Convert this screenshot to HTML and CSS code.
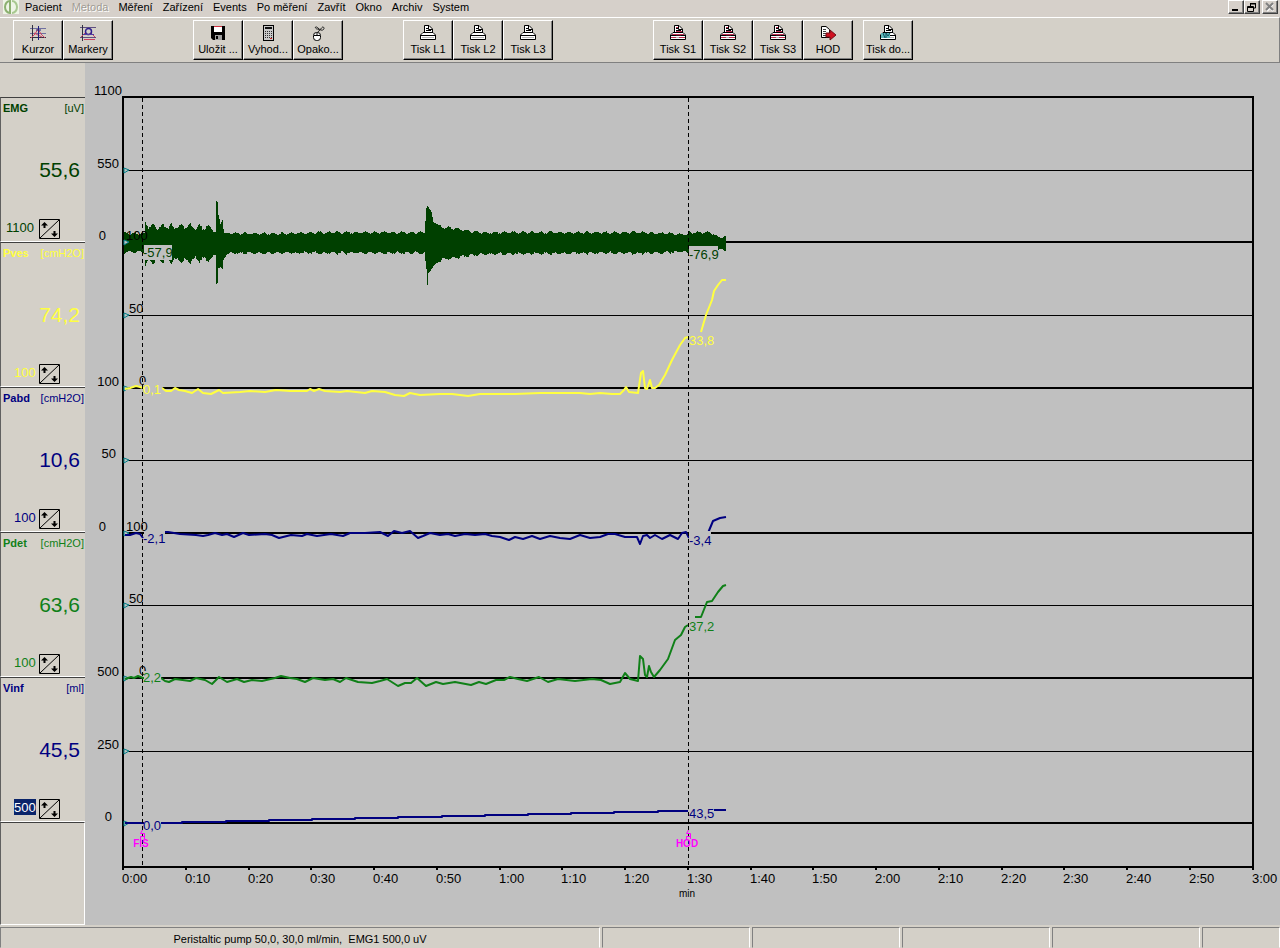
FILE: index.html
```html
<!DOCTYPE html>
<html lang="cs">
<head>
<meta charset="utf-8">
<title>Urodynamika</title>
<link rel="stylesheet" href="styles.css">
</head>
<body>
<svg class="defs" aria-hidden="true">
  <defs>
    <symbol id="printer" viewBox="0 0 16 16">
      <path d="M4.500 8V0.500H9L12.500 4V8" fill="#fff" stroke="#000"/>
      <path d="M8.500 1V4.500H12M6 3.500H8M6 5.500H11" fill="none" stroke="#000"/>
      <path d="M3 7.500H13L15.500 10V14.500H0.500V10Z" fill="#fff" stroke="#000"/>
      <path d="M1 10.500H15M3 7.500H13" stroke="#000"/>
      <path d="M2 12.500H14" stroke="#b8b8b8"/>
    </symbol>
    <symbol id="printer-red" viewBox="0 0 16 16">
      <use href="#printer"/>
      <path d="M6 2.500H8M6 6.500H12M2 9.500H14M1 12.500H6M9 12.500H15" stroke="#c03050"/>
      <path d="M6 10.500H11" stroke="#301018"/>
    </symbol>
    <symbol id="spin" viewBox="0 0 21 20">
      <path d="M0.500 19.500V0.500H20.500V19.500ZM1 19L20 1" fill="none" stroke="#000"/>
      <path d="M5.500 3L9 6.500H6.500V9H4.500V6.500H2ZM15.500 18L19 14.500H16.500V12H14.500V14.500H12Z" fill="#000"/>
    </symbol>
  </defs>
</svg>

<header class="menubar">
  <svg class="logo" viewBox="0 0 16 14" aria-hidden="true">
    <rect width="16" height="14" fill="#eef4e6"/>
    <path d="M7 1A5 6 0 0 0 7 13Z" fill="none" stroke="#8cb070" stroke-width="2"/>
    <path d="M9 1A5 6 0 0 1 9 13" fill="none" stroke="#a8c890" stroke-width="2"/>
  </svg>
  <nav class="menu">
    <button>Pacient</button><button disabled>Metoda</button><button>Měření</button><button>Zařízení</button><button>Events</button><button>Po měření</button><button>Zavřít</button><button>Okno</button><button>Archiv</button><button>System</button>
  </nav>
  <div class="winbtns">
    <button aria-label="Minimalizovat"><svg viewBox="0 0 12 10"><path d="M2 8H8" stroke="#000" stroke-width="2"/></svg></button>
    <button aria-label="Obnovit"><svg viewBox="0 0 12 10"><path d="M4.500 4V1.500H9.500V6H8M4 1.500H10M1.500 4.500H7.500V9.500H1.500ZM1 5.500H8M4 2H10" fill="none" stroke="#000"/></svg></button>
    <button class="close" aria-label="Zavřít okno" disabled><svg viewBox="0 0 12 10"><path d="M3 2L9 9M9 2L3 9" stroke="#fff" stroke-width="2"/><path d="M2 1L9 8M9 1L2 8" stroke="#808080" stroke-width="2"/></svg></button>
  </div>
</header>

<div class="toolbar">
  <div class="group">
    <button><svg viewBox="0 0 16 16"><path d="M0 3.500H16M0 8.500H16" stroke="#7070a0"/><path d="M2.500 0V16M0 12.500H16" stroke="#303040"/><path d="M1 13L5 9L8 4L11 9L15 13M4 8L12 12" fill="none" stroke="#d04060"/><path d="M8.500 1V15M6 5H11" stroke="#202080"/></svg>Kurzor</button>
    <button><svg viewBox="0 0 16 16"><path d="M0 2.500H16M0 12.500H16" stroke="#605080"/><path d="M2.500 0V16" stroke="#303040"/><path d="M1 12L5 8L8 10L11 8L15 12M4 14.500H15" fill="none" stroke="#d04060"/><circle cx="8.500" cy="6.500" r="3" fill="none" stroke="#302090" stroke-width="1.500"/><path d="M3 9.500H14" stroke="#5040a0"/></svg>Markery</button>
  </div>
  <div class="group g-save">
    <button><svg viewBox="0 0 16 16"><path d="M1 1H15V15H3L1 13Z" fill="#000"/><path d="M4 1H12V7H4Z" fill="#fff"/><path d="M4 1.500H12" stroke="#d03040"/><path d="M5 10H12V15H5Z" fill="#a0a0a0"/><path d="M6 11H8V14H6Z" fill="#000"/></svg>Uložit ...</button>
    <button><svg viewBox="0 0 16 16"><rect x="3.500" y="0.500" width="10" height="15" fill="#c8c8c8" stroke="#000"/><path d="M5 3H12" stroke="#101010" stroke-width="2"/><path d="M5 6.500H12M5 8.500H12M5 10.500H12M5 12.500H12" stroke="#303030" stroke-dasharray="1 1"/><path d="M10 13.500H12" stroke="#d02020"/></svg>Vyhod...</button>
    <button><svg viewBox="0 0 16 16"><path d="M7 8L12 2.500C13 1 15 3 13.500 4.500C12 6 10 5 8 3C6.500 1.500 5 1.500 5.500 3C6 4.500 9 3.500 10 5.500" fill="none" stroke="#202020"/><rect x="3.500" y="7.500" width="7" height="8" rx="3" fill="#fff" stroke="#000"/><path d="M4 10.500H10M7 8V10" stroke="#000"/></svg>Opako...</button>
  </div>
  <div class="group g-line">
    <button><svg><use href="#printer"/></svg>Tisk L1</button>
    <button><svg><use href="#printer"/></svg>Tisk L2</button>
    <button><svg><use href="#printer"/></svg>Tisk L3</button>
  </div>
  <div class="group g-summary">
    <button><svg><use href="#printer-red"/></svg>Tisk S1</button>
    <button><svg><use href="#printer-red"/></svg>Tisk S2</button>
    <button><svg><use href="#printer-red"/></svg>Tisk S3</button>
    <button><svg viewBox="0 0 16 16"><path d="M1.500 1.500H6L9.500 4.500V12.500H1.500Z" fill="#fff" stroke="#000"/><path d="M3 4.500H6M3 6.500H6M3 8.500H6M3 10.500H6" stroke="#404040"/><path d="M6 8H10V5L16 10L10 15V12H6Z" fill="#d01020" stroke="#701018"/></svg>HOD</button>
  </div>
  <div class="group g-file">
    <button><svg viewBox="0 0 16 16"><use href="#printer"/><path d="M1 8H10V13H1Z" fill="#60b8b8"/><path d="M3 8L5 13M6 13V8L8 11L10 8" stroke="#105060" fill="none"/></svg>Tisk do...</button>
  </div>
</div>

<main class="workspace">
  <aside class="channels">
    <section class="channel emg">
      <h2>EMG <span>[uV]</span></h2><output>55,6</output>
      <div class="scale"><input class="wide" aria-label="EMG rozsah" value="1100"><button aria-label="Změnit rozsah EMG"><svg><use href="#spin"/></svg></button></div>
    </section>
    <section class="channel pves">
      <h2>Pves <span>[cmH2O]</span></h2><output>74,2</output>
      <div class="scale"><input aria-label="Pves rozsah" value="100"><button aria-label="Změnit rozsah Pves"><svg><use href="#spin"/></svg></button></div>
    </section>
    <section class="channel pabd">
      <h2>Pabd <span>[cmH2O]</span></h2><output>10,6</output>
      <div class="scale"><input aria-label="Pabd rozsah" value="100"><button aria-label="Změnit rozsah Pabd"><svg><use href="#spin"/></svg></button></div>
    </section>
    <section class="channel pdet">
      <h2>Pdet <span>[cmH2O]</span></h2><output>63,6</output>
      <div class="scale"><input aria-label="Pdet rozsah" value="100"><button aria-label="Změnit rozsah Pdet"><svg><use href="#spin"/></svg></button></div>
    </section>
    <section class="channel vinf">
      <h2>Vinf <span>[ml]</span></h2><output>45,5</output>
      <div class="scale"><input class="selected" aria-label="Vinf rozsah" value="500"><button aria-label="Změnit rozsah Vinf"><svg><use href="#spin"/></svg></button></div>
    </section>
    <div class="spare"></div>
  </aside>

  <div class="plot">
  <svg class="chart" viewBox="85 63 1195 862" role="img" aria-label="Průběh měření">
    <clipPath id="before-marker"><rect x="124" y="97" width="19" height="770"/></clipPath>
    <g class="grid">
      <path class="thin" d="M124 170.500H1252M124 315.500H1252M124 460.500H1252M124 605.500H1252M124 751.500H1252"/>
      <path class="thick" d="M123 97H1253V867H123ZM124 242H1252M124 388H1252M124 533H1252M124 678H1252M124 823H1252"/>
      <path id="ticks" class="thick"/>
    </g>
    <path id="emg-trace"/>
    <path id="pointers" class="pointer"/>
    <g class="axis">
      <g text-anchor="end">
        <text x="122" y="95">1100</text><text x="119" y="168">550</text><text x="106" y="240">0</text>
        <text x="119" y="386">100</text><text x="116" y="458">50</text><text x="106" y="531">0</text>
        <text x="119" y="676">500</text><text x="119" y="749">250</text><text x="112" y="821">0</text>
      </g>
      <text x="126" y="240">100</text>
      <text x="126" y="531">100</text>
      <g clip-path="url(#before-marker)">
        <text x="129" y="313">50</text><text x="129" y="603">50</text>
      </g>
      <text x="139" y="385">0</text><text x="139" y="675">0</text>
      <g id="times"></g>
      <text class="unit" x="687" y="897" text-anchor="middle">min</text>
    </g>
    <g class="trace">
      <path class="c-pves" d="M125 389L130 388L136 386L140 387L143 388L162 388L166 391L171 391L175 388L179 390L185 391L192 393L198 389L203 393L211 394L219 390L223 393L240 392L250 391L265 392L276 390L290 391L307 391L310 389L314 391L319 389L325 391L340 392L347 391L365 393L372 391L385 392L395 395L404 396L410 393L420 395L440 394L452 394L460 395L468 396L480 394L500 394L515 394L540 393L560 393L580 393L590 394L600 393L612 394L620 394L624 390L626 387L629 392L638 393L641 373L643 371L645 388L647 389L650 380L652 388L655 388L659 385L665 375L672 360L680 345L685 338L688 337M701 332L706 315L712 300L714 291L718 285L722 280L726 280"/>
      <path class="c-pabd" d="M125 535L130 535L136 533L140 534L143 538M165 532L168 532L180 534L196 535L203 536L208 535L215 533L222 535L227 534L234 537L243 533L249 535L265 534L272 535L279 538L291 535L302 536L307 534L317 536L324 535L331 534L343 536L350 533L365 533L380 532L388 536L394 531L402 533L410 531L418 538L423 536L430 533L440 535L448 534L455 536L465 534L475 535L485 534L492 536L500 537L509 540L515 537L523 539L532 536L540 539L550 536L560 538L570 539L580 535L590 538L600 537L608 534L615 534L625 537L637 537L640 544L643 536L647 535L650 538L655 535L662 539L670 535L678 539L682 533L686 532L689 538M708 533L713 521L720 518L726 517"/>
      <path class="c-pdet" d="M125 679L131 677L134 678L138 676L143 678L161 678L165 681L169 682L175 679L190 681L196 678L205 680L212 684L219 677L227 682L237 679L244 682L252 680L262 681L275 678L281 676L290 678L297 679L305 682L313 678L325 680L333 679L340 682L346 678L358 682L372 683L380 681L387 679L398 686L405 683L411 683L417 678L426 686L436 682L443 684L455 682L471 685L479 682L486 684L496 680L504 680L510 677L518 679L527 681L539 677L548 682L558 679L575 681L592 679L601 680L610 684L620 682L625 673L630 679L638 681L640 656L643 659L645 675L647 677L649 666L651 672L654 677L660 670L668 659L675 640L681 635L685 627L688 625M695 617L701 617L707 602L712 601L718 592L723 586L726 585"/>
      <path class="c-vinf" d="M125 823H182V822H226V821H269V820H312V819H355V818H398V817H442V816H485V815H528V814H571V813H614V812H658V811H688M714 810H726"/>
    </g>
    <g class="labelbox">
      <rect x="144" y="245" width="28" height="15"/><rect x="144" y="382" width="18" height="14"/>
      <rect x="144" y="531" width="21" height="14"/><rect x="144" y="671" width="17" height="14"/>
      <rect x="144" y="818" width="17" height="14"/>
      <rect x="689" y="246" width="29" height="15"/><rect x="689" y="531" width="22" height="15"/>
    </g>
    <path class="marker" d="M142.500 98V866M688.500 98V866"/>
    <g class="readings">
      <text class="c-emg" x="143" y="257">-57,9</text><text class="c-pves" x="143" y="394">0,1</text>
      <text class="c-pabd" x="143" y="543">-2,1</text><text class="c-pdet" x="143" y="682">2,2</text>
      <text class="c-vinf" x="143" y="830">0,0</text>
      <text class="c-emg" x="689" y="259">-76,9</text><text class="c-pves" x="689" y="345">33,8</text>
      <text class="c-pabd" x="689" y="545">-3,4</text><text class="c-pdet" x="689" y="631">37,2</text>
      <text class="c-vinf" x="689" y="818">43,5</text>
    </g>
    <g class="events">
      <path d="M142.500 830L140.500 833.500H144.500V836.500H140.500V839M144.500 836V839M688.500 830L686.500 833.500H690.500V836.500H686.500V839M690.500 836V839"/>
      <text x="141" y="847" text-anchor="middle">FIS</text><text x="687" y="847" text-anchor="middle">HOD</text>
    </g>
  </svg>
  </div>
</main>

<footer class="statusbar">
  <div class="message">Peristaltic pump 50,0, 30,0 ml/min,&nbsp; EMG1 500,0 uV</div>
  <div></div><div></div><div></div><div></div><div class="last"></div>
</footer>
<script src="script.js"></script>
</body>
</html>
```
FILE: styles.css
```css
* { box-sizing: border-box; }
body {
  margin: 0;
  min-height: 100vh;
  display: flex;
  flex-direction: column;
  background: #d4d0c8;
  color: #000;
  font: 11px/14px "Liberation Sans", Arial, sans-serif;
}
button, input { font: inherit; color: inherit; margin: 0; padding: 0; border: 0; background: none; }
svg { display: block; }
.defs { position: absolute; width: 0; height: 0; }

.menubar { display: flex; height: 17px; padding: 0 2px 0 3px; background: #d6d0ca; }
.logo { width: 16px; height: 14px; }
.menu { display: flex; gap: 10px; padding-left: 6px; flex: 1; }
.menu button { height: 14px; white-space: nowrap; }
.menu button:disabled { color: #a09c94; text-shadow: 1px 1px 0 #fff; }
.winbtns { display: flex; height: 14px; }
.winbtns button {
  width: 16px;
  border: 1px solid;
  border-color: #fff #404040 #404040 #fff;
  box-shadow: inset -1px -1px 0 #808080;
}
.winbtns svg { width: 12px; height: 10px; margin: 0 1px; }
.winbtns .close { margin-left: 2px; }

.toolbar {
  display: flex;
  padding: 2px 0 2px 13px;
  border-top: 1px solid #fff;
  border-bottom: 1px solid #808080;
  border-right: 1px solid #808080;
}
.group { display: flex; }
.g-save { margin-left: 80px; }
.g-line { margin-left: 60px; }
.g-summary { margin-left: 100px; }
.g-file { margin-left: 10px; }
.group button {
  width: 50px;
  height: 40px;
  display: flex;
  flex-direction: column;
  align-items: center;
  padding-top: 4px;
  border: 1px solid;
  border-color: #fff #000 #000 #fff;
  box-shadow: inset -1px -1px 0 #808080;
  line-height: 16px;
  white-space: nowrap;
}
.group svg { width: 16px; height: 16px; }

.workspace { flex: 1; display: flex; background: #c0c0c0; }
.channels { width: 85px; display: flex; flex-direction: column; padding-top: 34px; background: #d4d0c8; }
.channel {
  height: 145px;
  display: flex;
  flex-direction: column;
  border-top: 1px solid #404040;
  border-left: 1px solid #606060;
  border-bottom: 1px solid #fff;
  padding: 3px 1px 2px 2px;
}
.channel h2 { margin: 0; font-size: 11px; line-height: 14px; display: flex; justify-content: space-between; }
.channel h2 span { font-weight: normal; }
.channel output { margin: auto 4px auto 0; padding-top: 5px; text-align: right; font-size: 21px; line-height: 24px; }
.scale { display: flex; height: 20px; padding-left: 11px; gap: 3px; }
.scale input { width: 22px; height: 16px; font-size: 13px; }
.scale input.wide { width: 30px; margin-left: -8px; }
.scale input.selected { background: #0a246a; color: #fff; }
.scale button, .scale svg { width: 21px; height: 20px; }
.spare {
  flex: 1;
  border: 1px solid;
  border-color: #404040 #fff #fff #606060;
}
.emg, .c-emg { color: #004000; }
.pves, .c-pves { color: #ffff40; }
.pabd, .vinf, .c-pabd, .c-vinf { color: #000080; }
.pdet, .c-pdet { color: #108018; }

.plot { flex: 1; min-width: 0; }
.chart { width: 100%; height: auto; }
.grid path { fill: none; stroke: #000; shape-rendering: crispEdges; }
.thin { stroke-width: 1; }
.grid .thick { stroke-width: 2; }
#emg-trace { fill: #004000; shape-rendering: crispEdges; }
.pointer { fill: #c0c0c0; stroke: #008088; }
.axis text, .readings text { font-size: 13px; }
.axis .unit { font-size: 10px; }
.readings text { fill: currentColor; }
.trace path { fill: none; stroke: currentColor; stroke-width: 2; stroke-linejoin: round; }
.labelbox { fill: #c0c0c0; }
.marker { stroke: #000; stroke-dasharray: 4 3; shape-rendering: crispEdges; }
.events text { fill: #f0f; font-weight: bold; font-size: 10px; }
.events path { fill: none; stroke: #f0f; }

.statusbar { display: flex; gap: 2px; height: 23px; padding-top: 2px; }
.statusbar div {
  flex: 0 0 148px;
  border: 1px solid;
  border-color: #808080 #fff transparent #808080;
}
.statusbar .message { flex: 1 1 0; text-align: center; line-height: 22px; }
.statusbar .last { flex-basis: 78px; }
```
FILE: script.js
```javascript
// Time axis: one tick and label for every ten seconds.
const times = document.getElementById('times');
let ticks = '';
for (let i = 0; i <= 18; i++) {
  const x = Math.round(123 + i * 62.75);
  ticks += `M${x} 867V870`;
  const label = document.createElementNS('http://www.w3.org/2000/svg', 'text');
  label.setAttribute('x', x - 1);
  label.setAttribute('y', 883);
  label.textContent = Math.floor(i / 6) + ':' + (i % 6) + '0';
  times.append(label);
}
document.getElementById('ticks').setAttribute('d', ticks);

// Scale pointers on the left axis.
document.getElementById('pointers').setAttribute('d',
  [170, 242, 315, 388, 460, 533, 605, 678, 751, 823]
    .map(y => `M124 ${y - 2}L129 ${y}L124 ${y + 3}Z`).join(''));

// EMG envelope as [x, top, bottom] with a small ripple between the points.
const envelope = [
  [124, 233, 252], [144, 233, 252], [145, 222, 265], [150, 225, 262], [212, 226, 260],
  [213, 231, 256], [215, 231, 255], [216, 201, 283], [217, 202, 282], [218, 215, 268],
  [220, 223, 267], [222, 218, 270], [223, 228, 260], [224, 232, 258], [227, 233, 253],
  [280, 233, 253], [320, 232, 253], [424, 232, 253], [426, 207, 270], [427, 205, 285],
  [428, 207, 272], [431, 212, 269], [433, 221, 266], [440, 226, 260], [460, 229, 257],
  [480, 232, 254], [600, 232, 253], [640, 232, 253], [688, 234, 252], [689, 232, 250],
  [710, 232, 250], [717, 236, 250], [720, 237, 249], [725, 236, 250]
];
let seed = 7;
const rnd = () => (seed = (seed * 16807) % 2147483647) / 2147483647;
const upper = [], lower = [];
let k = 0;
for (let x = 124; x <= 725; x++) {
  while (k < envelope.length - 2 && envelope[k + 1][0] <= x) k++;
  const a = envelope[k], b = envelope[k + 1];
  const t = (x - a[0]) / (b[0] - a[0]);
  const size = x > 145 && x < 213 ? 2.5 : 1;
  const ripple = size * Math.cos(x * 0.68) + rnd() * size;
  const top = Math.round(a[1] + (b[1] - a[1]) * t + ripple);
  const bottom = Math.round(a[2] + (b[2] - a[2]) * t - ripple + rnd());
  upper.push(`${x} ${top}`, `${x + 1} ${top}`);
  lower.unshift(`${x + 1} ${bottom}`, `${x} ${bottom}`);
}
document.getElementById('emg-trace').setAttribute('d', 'M' + upper.concat(lower).join('L') + 'Z');
```
